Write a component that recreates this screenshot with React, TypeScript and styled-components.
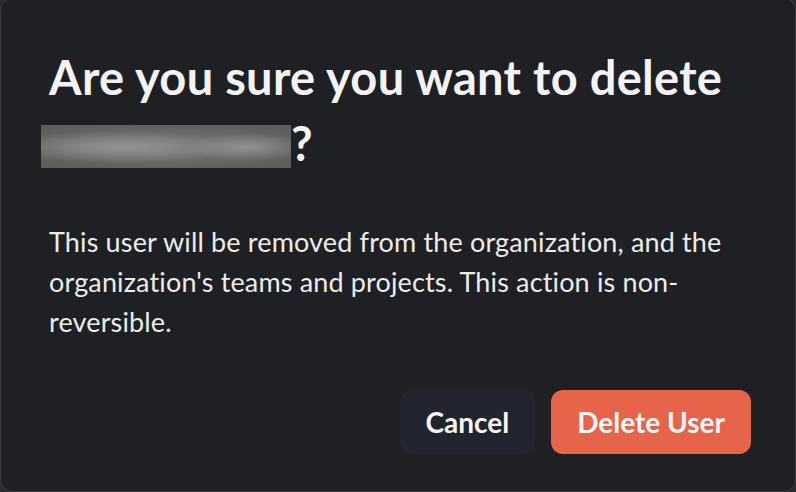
import React from "react";
import styled, { createGlobalStyle } from "styled-components";

const Global = createGlobalStyle`
  html, body { margin: 0; padding: 0; background: #2a2b2e; }
  body { font-family: Lato, "Noto Sans", sans-serif; }
  * { box-sizing: border-box; }
`;

const Modal = styled.div`
  width: 796px;
  height: 494px;
  margin-top: -2px;
  background: #1f2024;
  border: 1px solid #3c3d42;
  border-radius: 12px;
  padding: 45px 44px 37px 48px;
  display: flex;
  flex-direction: column;
`;

const Title = styled.h1`
  margin: 0;
  font-size: 47px;
  line-height: 66px;
  font-weight: 700;
  color: #f3f3f3;
  letter-spacing: 0.3px;
`;

const Redacted = styled.span`
  display: inline-block;
  width: 250px;
  height: 43px;
  margin-left: -8px;
  vertical-align: -7px;
  background:
    radial-gradient(ellipse 60px 14px at 205px 22px, #929292, transparent),
    radial-gradient(ellipse 120px 16px at 80px 22px, #939393, transparent),
    radial-gradient(ellipse 150px 24px at 125px 22px, #7a7a7a, transparent),
    #5e5e5e;
`;

const Body = styled.p`
  margin: 46px 0 0;
  font-size: 27px;
  line-height: 40px;
  color: #ececec;
  letter-spacing: 0.15px;
`;

const Footer = styled.div`
  margin-top: auto;
  display: flex;
  justify-content: flex-end;
  gap: 16px;
`;

const Button = styled.button<{ $danger?: boolean }>`
  height: 64px;
  padding: 0 26px;
  border: none;
  border-radius: 12px;
  font-family: Lato, "Noto Sans", sans-serif;
  font-size: 28px;
  font-weight: 700;
  color: #f6f6f6;
  background: ${(p) => (p.$danger ? "#e5644a" : "#22242f")};
  cursor: pointer;
`;

export default function App() {
  return (
    <>
      <Global />
      <Modal>
        <Title>
          Are you sure you want to delete <Redacted />?
        </Title>
        <Body>
          This user will be removed from the organization, and the
          organization's teams and projects. This action is non-reversible.
        </Body>
        <Footer>
          <Button>Cancel</Button>
          <Button $danger>Delete User</Button>
        </Footer>
      </Modal>
    </>
  );
}
